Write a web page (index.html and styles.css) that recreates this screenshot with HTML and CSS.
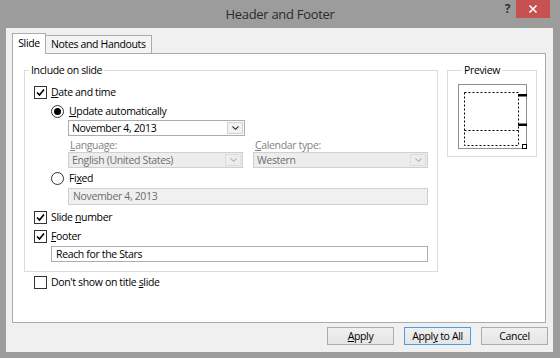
FILE: index.html
```html
<!doctype html>
<html lang="en">
<head>
    <meta charset="UTF-8">
    <title>Header and Footer</title>
    <link rel="stylesheet" href="styles.css">
</head>
<body>
<div class="window">
    <div class="titlebar">
        <span></span>
        <div class="title">Header and Footer</div>
        <div class="caption-btns">
            <span class="help">?</span>
            <span class="close">
                <svg width="10" height="10" viewBox="0 0 10 10"><path d="M1.5 1.5L8.5 8.5M8.5 1.5L1.5 8.5" stroke="#fff" stroke-width="1.6"/></svg>
            </span>
        </div>
    </div>
    <div class="client">
        <div class="tabs">
            <div class="tab active">Slide</div>
            <div class="tab">Notes and Handouts</div>
        </div>
        <div class="panel">
            <div class="groups">
                <fieldset class="group include">
                    <legend>Include on slide</legend>
                    <div class="row r-date">
                        <span class="check"><svg width="11" height="11" viewBox="0 0 11 11"><path d="M2 5.5L4.5 8L9 2.5" fill="none" stroke="#000" stroke-width="1.7"/></svg></span>
                        <span><u>D</u>ate and time</span>
                    </div>
                    <div class="row r-update">
                        <span class="radio on"></span>
                        <span><u>U</u>pdate automatically</span>
                    </div>
                    <div class="combo date-combo">
                        <span class="combo-text">November 4, 2013</span>
                        <span class="combo-arrow"><svg width="7" height="4" viewBox="0 0 7 4"><path d="M0.5 0.5L3.5 3.3L6.5 0.5" fill="none" stroke="#333" stroke-width="1.1"/></svg></span>
                    </div>
                    <div class="pair labels">
                        <span class="dim"><u>L</u>anguage:</span>
                        <span class="dim"><u>C</u>alendar type:</span>
                    </div>
                    <div class="pair">
                        <div class="combo disabled">
                            <span class="combo-text">English (United States)</span>
                            <span class="combo-arrow"><svg width="7" height="4" viewBox="0 0 7 4"><path d="M0.5 0.5L3.5 3.3L6.5 0.5" fill="none" stroke="#b5b5b5" stroke-width="1.1"/></svg></span>
                        </div>
                        <div class="combo disabled">
                            <span class="combo-text">Western</span>
                            <span class="combo-arrow"><svg width="7" height="4" viewBox="0 0 7 4"><path d="M0.5 0.5L3.5 3.3L6.5 0.5" fill="none" stroke="#b5b5b5" stroke-width="1.1"/></svg></span>
                        </div>
                    </div>
                    <div class="row r-fixed">
                        <span class="radio"></span>
                        <span>Fi<u>x</u>ed</span>
                    </div>
                    <div class="field disabled fixed-field">November 4, 2013</div>
                    <div class="row r-slidenum">
                        <span class="check"><svg width="11" height="11" viewBox="0 0 11 11"><path d="M2 5.5L4.5 8L9 2.5" fill="none" stroke="#000" stroke-width="1.7"/></svg></span>
                        <span>Slide <u>n</u>umber</span>
                    </div>
                    <div class="row r-footer">
                        <span class="check"><svg width="11" height="11" viewBox="0 0 11 11"><path d="M2 5.5L4.5 8L9 2.5" fill="none" stroke="#000" stroke-width="1.7"/></svg></span>
                        <span><u>F</u>ooter</span>
                    </div>
                    <div class="field footer-field">Reach for the Stars</div>
                </fieldset>
                <fieldset class="group preview">
                    <legend>Preview</legend>
                    <svg class="preview-box" width="69" height="65" viewBox="0 0 69 65">
                        <rect x="0.5" y="0.5" width="68" height="64" fill="#fff" stroke="#8f8f8f"/>
                        <g fill="none" stroke="#000" stroke-width="1" stroke-dasharray="2 2">
                            <rect x="6.5" y="8.5" width="54" height="53"/>
                            <line x1="6.5" y1="46.5" x2="60.5" y2="46.5"/>
                        </g>
                        <rect x="60" y="10" width="9" height="2.5" fill="#000"/>
                        <rect x="60" y="39.5" width="9" height="2.5" fill="#000"/>
                        <rect x="64.5" y="60.5" width="4" height="4" fill="#fff" stroke="#000"/>
                    </svg>
                </fieldset>
            </div>
            <div class="row r-title">
                <span class="check"></span>
                <span>Don't show on title <u>s</u>lide</span>
            </div>
        </div>
        <div class="buttons">
            <div class="btn"><u>A</u>pply</div>
            <div class="btn default">Appl<u>y</u> to All</div>
            <div class="btn">Cancel</div>
        </div>
    </div>
</div>
</body>
</html>
```

FILE: styles.css
```css
* { margin: 0; padding: 0; box-sizing: border-box; }
body { background: #9c9c9c; font-family: "Open Sans", "Noto Sans", sans-serif; font-size: 10.5px; letter-spacing: -0.35px; color: #000; }
u { text-decoration: underline; text-underline-offset: 1px; }

.window { width: 560px; height: 358px; display: flex; flex-direction: column; background: #9c9c9c; }

.titlebar { height: 28px; display: grid; grid-template-columns: 1fr auto 1fr; }
.title { line-height: 28px; font-size: 13px; letter-spacing: -0.3px; color: #2b2b2b; }
.caption-btns { display: flex; justify-content: flex-end; align-items: flex-start; padding-right: 10px; }
.help { font-size: 12px; font-weight: bold; color: #333; line-height: 18px; margin-right: 6px; }
.close { width: 34px; height: 18px; background: #c75050; display: flex; align-items: center; justify-content: center; }

.client { flex: 1; margin: 0 7px 6px 6px; background: #f0f0f0; padding: 5px 5px 7px 6px; display: flex; flex-direction: column; }

.tabs { display: flex; align-items: flex-end; height: 21px; margin-bottom: -1px; position: relative; z-index: 1; }
.tab { height: 18px; margin-bottom: 1px; border: 1px solid #acacac; border-bottom: none; background: #f4f4f4; line-height: 16px; padding: 0 5px; margin-left: -1px; }
.tab.active { height: 21px; width: 34px; margin-left: 0; margin-bottom: 0; background: #fff; text-align: center; padding: 1px 0 0; line-height: 17px; }

.panel { height: 270px; margin-right: 2px; background: #fff; border: 1px solid #acacac; padding: 8px 0 0 11px; }
.groups { display: flex; align-items: flex-start; }

.group { border: 1px solid #dcdcdc; min-width: 0; }
.group legend { margin-left: 4px; padding: 0 2px; line-height: 16px; }
.include { width: 414px; padding: 5px 0 9px; }
.preview { width: 90px; margin-left: 9px; padding: 6px 0 7px 10px; }
.preview-box { display: block; }

.row { display: flex; align-items: center; height: 18px; }
.check { width: 13px; height: 13px; border: 1px solid #333; background: #fff; margin-right: 4px; display: flex; align-items: center; justify-content: center; }
.radio { width: 13px; height: 13px; border: 1px solid #333; border-radius: 50%; background: #fff; margin-right: 5px; display: flex; align-items: center; justify-content: center; }
.radio.on::after { content: ""; width: 7px; height: 7px; border-radius: 50%; background: #000; }

.r-date { padding-left: 9px; }
.r-update { padding-left: 26px; margin-top: 1px; }
.r-fixed { padding-left: 26px; margin-top: 1px; }
.r-slidenum { padding-left: 9px; margin-top: 3px; }
.r-footer { padding-left: 9px; margin-top: 1px; }
.r-title { padding-left: 10px; margin-top: 1px; }

.combo { height: 16px; border: 1px solid #acacac; background: #fff; display: flex; }
.combo-text { flex: 1; padding-left: 3px; line-height: 14px; }
.combo-arrow { width: 16px; margin: 1px; border: 1px solid #d2d2d2; background: #f2f2f2; display: flex; align-items: center; justify-content: center; }
.date-combo { width: 177px; margin-left: 43px; }
.combo.disabled { border-color: #d0d0d0; background: #ededed; color: #6d6d6d; }
.combo.disabled .combo-arrow { border-color: #dcdcdc; background: #ededed; }

.pair { display: grid; grid-template-columns: 175px 175px; column-gap: 10px; margin-left: 43px; }
.pair .combo { width: 175px; }
.labels { height: 14px; margin-top: 2px; line-height: 14px; }
.labels span { padding-left: 2px; }
.dim { color: #838383; }

.field { height: 17px; border: 1px solid #abadb3; background: #fff; line-height: 15px; padding-left: 4px; }
.field.disabled { border-color: #d0d0d0; background: #f0f0f0; color: #6d6d6d; }
.fixed-field { width: 360px; margin-left: 43px; margin-top: 1px; }
.footer-field { width: 377px; margin-left: 26px; margin-top: 1px; height: 16px; line-height: 14px; }

.buttons { display: flex; justify-content: flex-end; gap: 10px; margin-top: 4px; }
.btn { width: 67px; height: 18px; border: 1px solid #acacac; background: linear-gradient(#f0f0f0, #e5e5e5); text-align: center; line-height: 16px; }
.btn.default { border-color: #4d9de6; }
```
